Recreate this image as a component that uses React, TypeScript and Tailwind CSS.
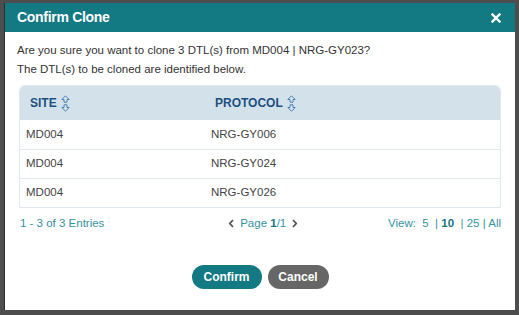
import React from "react";

const SortIcon = () => (
  <svg width="9" height="17" viewBox="0 0 9 17" className="ml-[4px]" fill="none" stroke="#3b78b5" strokeWidth="0.9" strokeLinejoin="round">
    <path d="M4.5 0.8 L8.2 4.5 L6 4.5 L6 7.2 L3 7.2 L3 4.5 L0.8 4.5 Z" />
    <path d="M4.5 16.2 L8.2 12.5 L6 12.5 L6 9.8 L3 9.8 L3 12.5 L0.8 12.5 Z" />
  </svg>
);

const rows = [
  ["MD004", "NRG-GY006"],
  ["MD004", "NRG-GY024"],
  ["MD004", "NRG-GY026"],
];

export default function App() {
  return (
    <div
      className="w-[519px] h-[315px] bg-[#4d4d4d] pl-[4px] pr-[4px] pt-[3px] pb-[5px]"
      style={{ fontFamily: '"Liberation Sans", Arial, sans-serif' }}
    >
      <div className="w-full h-full bg-white flex flex-col border-l border-[#2e2e2e]">
        <div className="h-[29px] bg-[#137983] flex items-center justify-between pl-[12px] pr-[14px]">
          <span className="text-white font-bold text-[14px] tracking-[-0.3px]">Confirm Clone</span>
          <svg width="10" height="10" viewBox="0 0 10 10" stroke="white" strokeWidth="2.4" strokeLinecap="square">
            <path d="M1.5 1.5 L8.5 8.5 M8.5 1.5 L1.5 8.5" />
          </svg>
        </div>
        <div className="pl-[12px] pt-[9px] text-[11.5px] leading-[19px] text-[#333]">
          <div>Are you sure you want to clone 3 DTL(s) from MD004 | NRG-GY023?</div>
          <div>The DTL(s) to be cloned are identified below.</div>
        </div>
        <div className="ml-[14px] mr-[14px] mt-[6px] border border-[#dfe8ef] rounded-t-[6px] overflow-hidden">
          <div className="h-[34px] bg-[#d3e2ea] flex items-center">
            <div className="w-[184px] pl-[10px] flex items-center text-[12px] font-bold text-[#1c4f80]">
              SITE
              <SortIcon />
            </div>
            <div className="pl-[11px] flex items-center text-[12px] font-bold text-[#1c4f80]">
              PROTOCOL
              <SortIcon />
            </div>
          </div>
          {rows.map((r, i) => (
            <div
              key={i}
              className={`h-[29px] flex items-center text-[11.5px] text-[#444] ${i > 0 ? "border-t border-[#dfe8ef]" : ""}`}
            >
              <div className="w-[184px] pl-[6px]">{r[0]}</div>
              <div className="pl-[7px]">{r[1]}</div>
            </div>
          ))}
        </div>
        <div className="ml-[15px] mr-[14px] mt-[7px] flex items-center justify-between text-[11.5px] text-[#3592a0]">
          <span>1 - 3 of 3 Entries</span>
          <span className="flex items-center gap-[5px] ml-[34px]">
            <svg width="7" height="9" viewBox="0 0 7 9" fill="none" stroke="#555" strokeWidth="1.8">
              <path d="M5 1 L1.8 4.5 L5 8" />
            </svg>
            <span>
              Page <b className="text-[#137983]">1</b>/1
            </span>
            <svg width="7" height="9" viewBox="0 0 7 9" fill="none" stroke="#555" strokeWidth="1.8">
              <path d="M2 1 L5.2 4.5 L2 8" />
            </svg>
          </span>
          <span>
            View:&nbsp; 5 &nbsp;| <b className="text-[#137983]">10</b> &nbsp;| 25 | All
          </span>
        </div>
        <div className="flex justify-center gap-[6px] mt-[33px]">
          <button className="w-[70px] h-[24px] rounded-full bg-[#137983] text-white font-bold text-[12px]">
            Confirm
          </button>
          <button className="w-[61px] h-[24px] rounded-full bg-[#666666] text-white font-bold text-[12px]">
            Cancel
          </button>
        </div>
      </div>
    </div>
  );
}
